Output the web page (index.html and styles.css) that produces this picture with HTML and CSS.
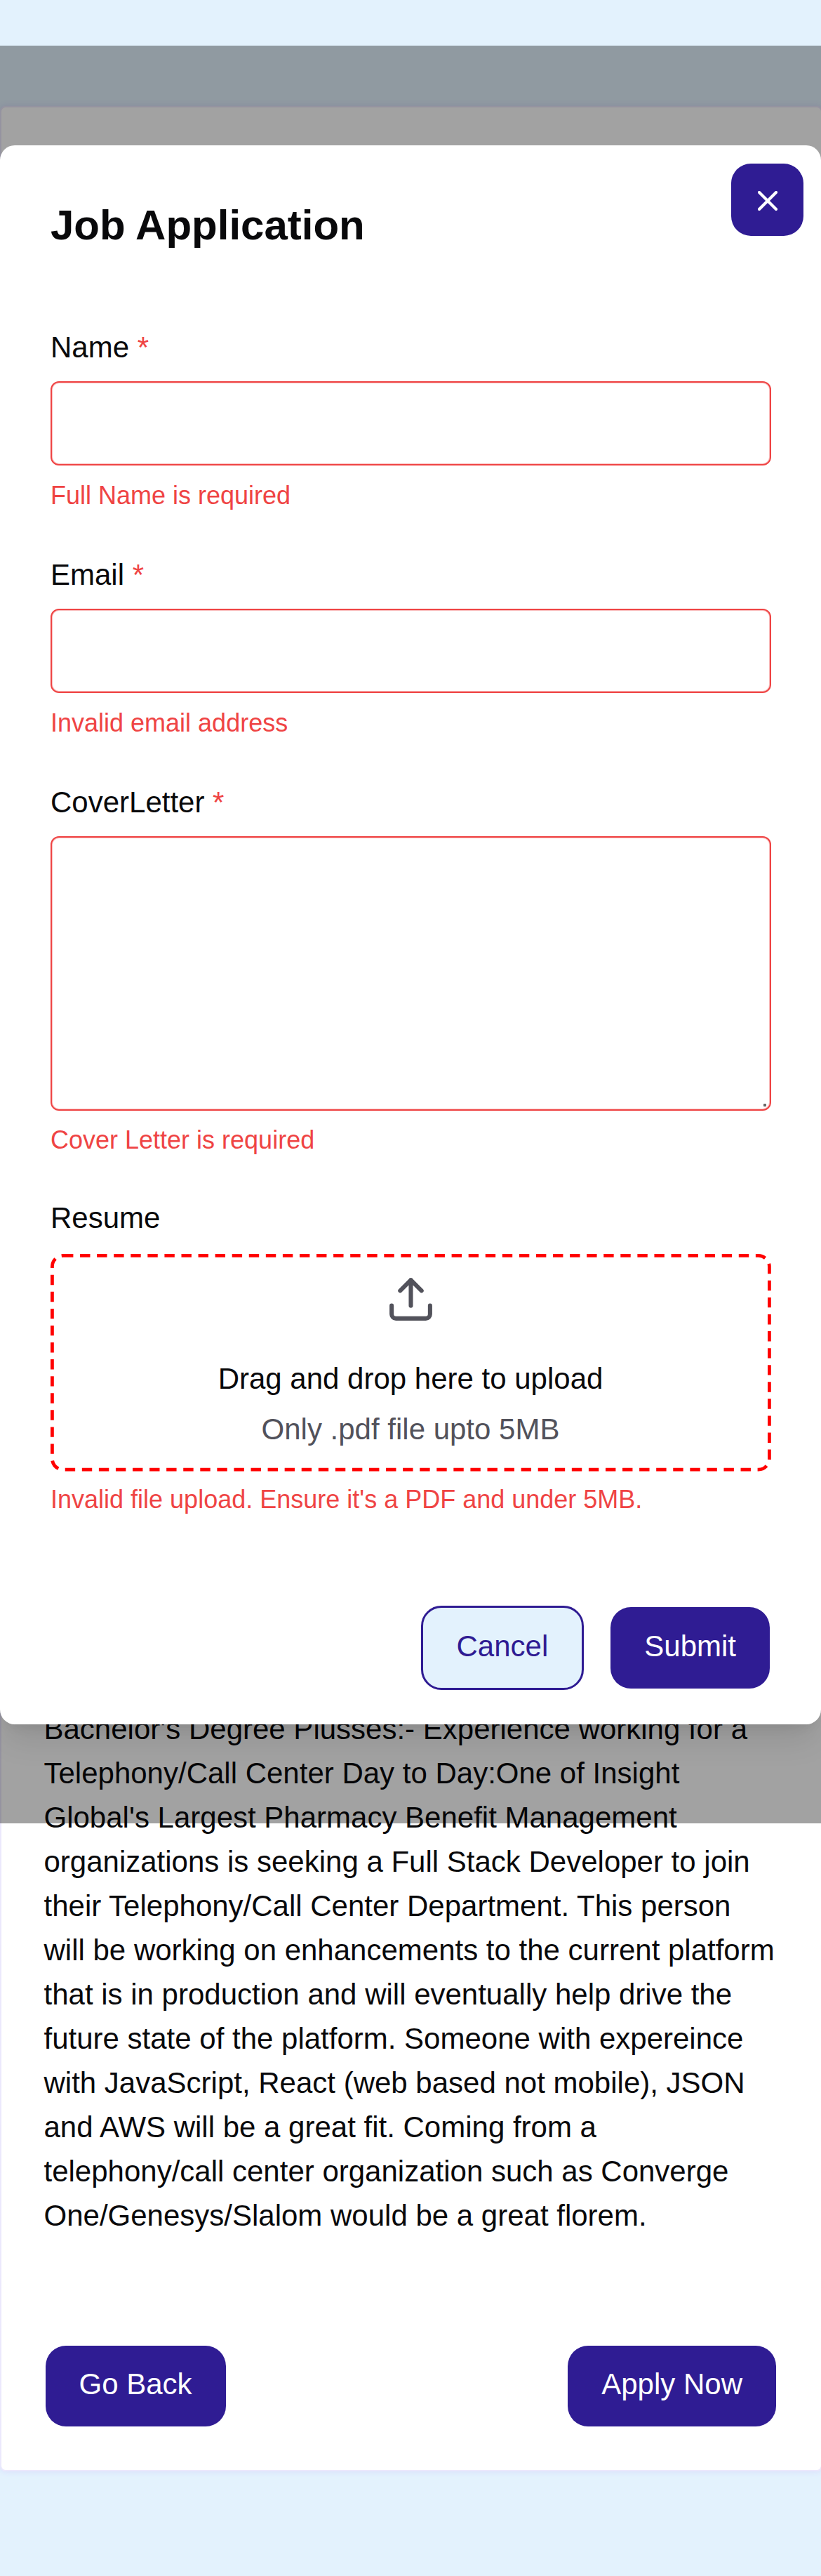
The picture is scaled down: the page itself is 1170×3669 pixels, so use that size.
FILE: index.html
```html
<!DOCTYPE html>
<html lang="en">
<head>
<meta charset="utf-8">
<title>Job Application</title>
<link rel="stylesheet" href="styles.css">
</head>
<body>
<div class="page">
  <main class="job-card">
    <p class="job-text">Bachelor's Degree Plusses:- Experience working for a Telephony/Call Center Day to Day:One of Insight Global's Largest Pharmacy Benefit Management organizations is seeking a Full Stack Developer to join their Telephony/Call Center Department. This person will be working on enhancements to the current platform that is in production and will eventually help drive the future state of the platform. Someone with expereince with JavaScript, React (web based not mobile), JSON and AWS will be a great fit. Coming from a telephony/call center organization such as Converge One/Genesys/Slalom would be a great florem.</p>
    <div class="job-actions">
      <button class="btn">Go Back</button>
      <button class="btn">Apply Now</button>
    </div>
  </main>

  <div class="backdrop">
    <section class="modal" role="dialog" aria-labelledby="modal-title">
      <button class="close" aria-label="Close">
        <svg width="28" height="28" viewBox="0 0 28 28"><path d="M2 2l24 24M26 2L2 26"/></svg>
      </button>
      <h1 class="title" id="modal-title">Job Application</h1>
      <form>
        <div class="field">
          <label class="label" for="name">Name <span class="star">*</span></label>
          <input class="control" id="name" type="text">
          <p class="error">Full Name is required</p>
        </div>
        <div class="field">
          <label class="label" for="email">Email <span class="star">*</span></label>
          <input class="control" id="email" type="text">
          <p class="error">Invalid email address</p>
        </div>
        <div class="field field-letter">
          <label class="label" for="letter">CoverLetter <span class="star">*</span></label>
          <div class="letter-wrap">
            <textarea class="control letter" id="letter"></textarea>
            <span class="grip"></span>
          </div>
          <p class="error">Cover Letter is required</p>
        </div>
        <div class="field field-resume">
          <span class="label">Resume</span>
          <div class="dropzone">
            <svg class="dashes" width="1027" height="310" viewBox="0 0 1027 310"><rect x="2.4" y="2.4" width="1022" height="304.7" rx="15.6"/></svg>
            <svg class="upload" width="73" height="73" viewBox="0 0 24 24"><path d="M21 15v4a2 2 0 0 1-2 2H5a2 2 0 0 1-2-2v-4M17 8l-5-5-5 5M12 3v12"/></svg>
            <p class="drop-main">Drag and drop here to upload</p>
            <p class="drop-hint">Only .pdf file upto 5MB</p>
          </div>
          <p class="error">Invalid file upload. Ensure it's a PDF and under 5MB.</p>
        </div>
        <div class="form-actions">
          <button class="btn btn-outline" type="button">Cancel</button>
          <button class="btn" type="button">Submit</button>
        </div>
      </form>
    </section>
  </div>
</div>
</body>
</html>
```
FILE: styles.css
```css
* {
  box-sizing: border-box;
}

body {
  margin: 0;
  font-family: "Liberation Sans", Arial, sans-serif;
  font-size: 42px;
  line-height: 63px;
  color: #09090b;
}

p,
h1 {
  margin: 0;
}

.page {
  position: relative;
  display: flex;
  height: 3669px;
  padding: 151px 0 149px;
  overflow: hidden;
  background: #e3f2fd;
}

/* Job details behind the dialog */
.job-card {
  display: flex;
  flex: 1;
  flex-direction: column;
  justify-content: flex-end;
  padding: 60px 60px 62px;
  border: 2px solid #ebe8fc;
  border-radius: 8px;
  background: #fff;
  box-shadow: 0 0 10px rgba(124, 58, 237, 0.12);
}

.job-text {
  width: 1048px;
  margin-bottom: 153.5px;
  padding-left: 0.5px;
}

.job-actions {
  display: flex;
  justify-content: space-between;
  padding: 0 3px 0 2.5px;
}

.job-actions .btn:last-child {
  margin-right: -2px;
  transform: translateX(-3px);
}

.btn {
  height: 115.5px;
  padding: 0 48px 5px;
  border: 0;
  border-radius: 29px;
  background: #2f1c93;
  color: #fff;
  font: inherit;
}

.btn-outline {
  height: 120px;
  border: 3px solid #2f1c93;
  background: #e3f2fd;
  color: #2f1c93;
}

/* Dialog */
.backdrop {
  position: absolute;
  top: 65px;
  left: 0;
  display: flex;
  align-items: center;
  width: 100%;
  height: 2532px;
  background: rgba(0, 0, 0, 0.365);
}

.modal {
  position: relative;
  width: 100%;
  height: 2249px;
  padding: 84px 72px 48px;
  border-radius: 21px;
  background: #fff;
  box-shadow: 0 30px 45px -9px rgba(0, 0, 0, 0.1), 0 12px 18px -12px rgba(0, 0, 0, 0.1);
}

.close {
  position: absolute;
  top: 26px;
  right: 25px;
  display: flex;
  align-items: center;
  justify-content: center;
  width: 103.5px;
  height: 103.5px;
  padding: 3px 0 0 2px;
  border: 0;
  border-radius: 28px;
  background: #2f1c93;
}

.close svg {
  fill: none;
  stroke: #fff;
  stroke-width: 4.2;
  stroke-linecap: round;
}

.title {
  margin-bottom: 112.5px;
  font-size: 60px;
  line-height: 60px;
}

.field {
  margin-bottom: 57.5px;
}

.field-letter {
  margin-bottom: 55.5px;
}

.field-resume {
  margin-bottom: 127px;
}

.label {
  display: block;
  margin-bottom: 16.5px;
}

.star {
  color: #ef4444;
}

.control {
  display: block;
  width: 1027px;
  height: 120px;
  padding: 0 36px;
  border: 2px solid #ef4444;
  border-radius: 12px;
  outline: 0;
  background: #fff;
  box-shadow: inset 0 0 0 1px rgba(239, 68, 68, 0.35);
  font: inherit;
}

.letter-wrap {
  position: relative;
}

.letter {
  height: 391px;
  resize: none;
}

.grip {
  position: absolute;
  right: 6px;
  bottom: 6px;
  width: 4px;
  height: 4px;
  border-radius: 1px;
  background: #666;
}

.error {
  margin-top: 19px;
  color: #ef4444;
  font-size: 36px;
  line-height: 48px;
}

.field-letter .error {
  margin-top: 18px;
}

.field-resume .label {
  margin-bottom: 20px;
}

.field-resume .error {
  margin-top: 16.5px;
}

.dropzone {
  position: relative;
  display: flex;
  flex-direction: column;
  align-items: center;
  width: 1026px;
  height: 309.5px;
  padding-top: 28px;
}

.dashes {
  position: absolute;
  top: 0;
  left: 0;
  fill: none;
  stroke: #f00;
  stroke-width: 4.8;
  stroke-dasharray: 14.4 9.67;
}

.upload {
  margin-bottom: 45px;
  fill: none;
  stroke: #52525b;
  stroke-width: 2;
  stroke-linecap: round;
  stroke-linejoin: round;
}

.drop-main {
  margin-bottom: 9px;
}

.drop-hint {
  color: #52525b;
}

.form-actions {
  display: flex;
  align-items: center;
  justify-content: flex-end;
  gap: 38px;
  padding-right: 1px;
}
```
